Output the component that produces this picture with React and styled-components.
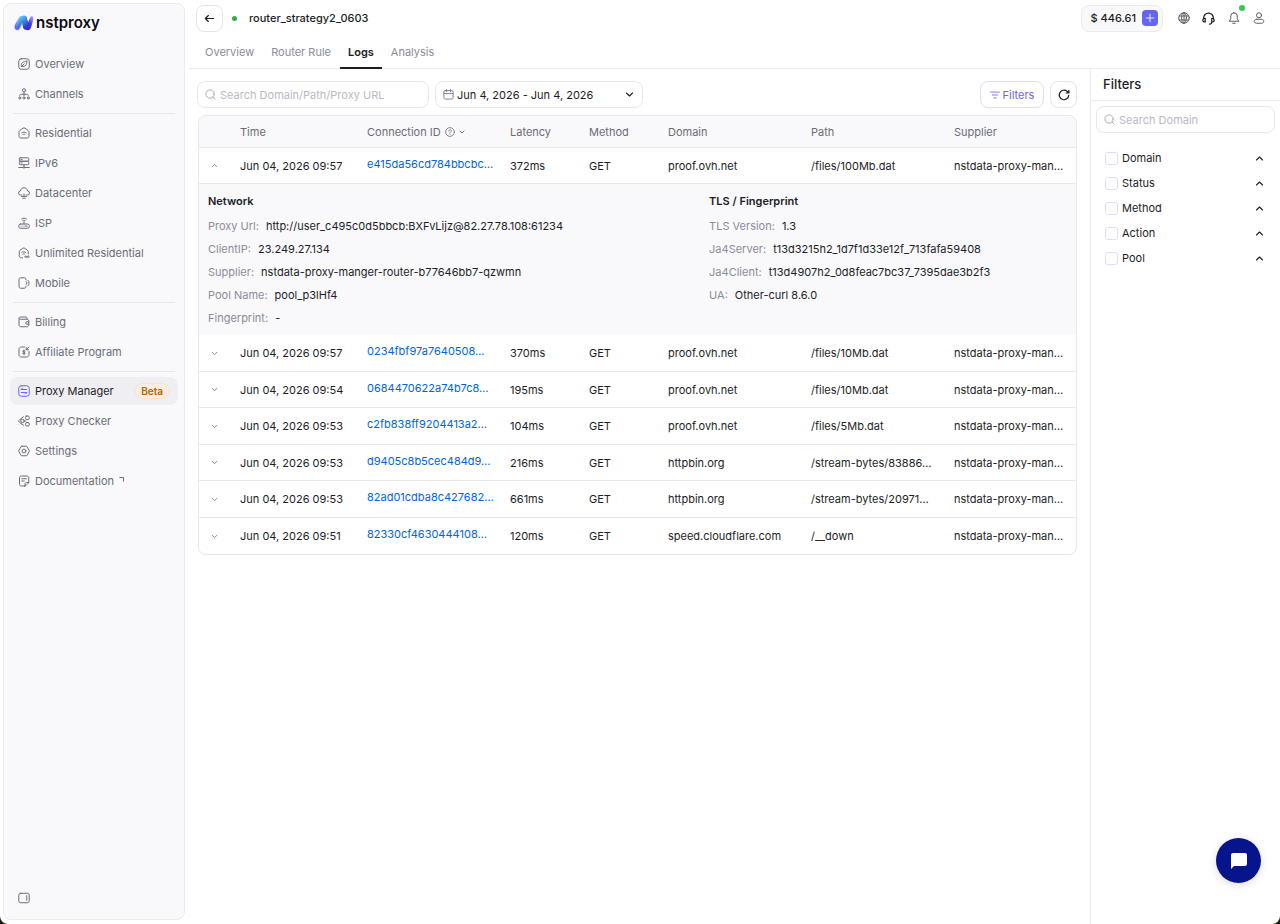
import React from "react";
import styled, { createGlobalStyle } from "styled-components";

const GlobalStyle = createGlobalStyle`
  * {
    box-sizing: border-box;
  }

  body {
    margin: 0;
    background: #1b1b10;
    color: #1c1d26;
    font-family: Inter, "Liberation Sans", sans-serif;
    font-size: 11px;
    line-height: 16px;
  }

  button,
  input {
    font: inherit;
    color: inherit;
  }

  button {
    padding: 0;
    border: 0;
    background: none;
    cursor: pointer;
  }

  a {
    color: inherit;
    text-decoration: none;
  }

  h1, h2, h3, p, dl, dd, ul {
    margin: 0;
    padding: 0;
  }
`;

const Icon = ({ size = 12, stroke = 2, children }) => (
  <svg
    width={size}
    height={size}
    viewBox="0 0 24 24"
    fill="none"
    stroke="currentColor"
    strokeWidth={stroke}
    strokeLinecap="round"
    strokeLinejoin="round"
    aria-hidden="true"
  >
    {children}
  </svg>
);

const icons = {
  overview: (
    <>
      <rect x="1.500" y="1.500" width="21" height="21" rx="5" />
      <path d="M17.500 6.500c.8 5-1 9.500-7.500 10.500-2 .3-3.300-.5-3.500-2C6 10.500 10 6.500 17.500 6.500z" />
      <path d="M6.500 17.500l6-6" />
    </>
  ),
  channels: (
    <>
      <circle cx="12" cy="4.500" r="3.200" />
      <path d="M12 8v8M3.500 16c0-2.500 1-3.500 3-3.500h11c2 0 3 1 3 3.500" />
      <circle cx="3.500" cy="20" r="2" />
      <circle cx="12" cy="20" r="2" />
      <circle cx="20.500" cy="20" r="2" />
    </>
  ),
  residential: (
    <>
      <path d="M2 10c0-1.300.5-2.200 1.600-3L10 2.300c1.300-.9 2.700-.9 4 0L20.400 7c1.100.8 1.600 1.700 1.600 3v8c0 2.500-1.500 4-4 4H6c-2.500 0-4-1.500-4-4z" />
      <path d="M7.500 11.500c2.800-1.800 6.200-1.800 9 0M10 14.800c1.300-.7 2.700-.7 4 0" />
    </>
  ),
  ipv6: (
    <>
      <rect x="2.500" y="1.500" width="19" height="7" rx="2" />
      <rect x="2.500" y="8.500" width="19" height="7" rx="2" />
      <path d="M6 5h2M6 12h2M12 15.500v4M1.500 21h8M14.500 21h8" />
      <circle cx="12" cy="21" r="1.500" />
    </>
  ),
  datacenter: (
    <>
      <path d="M8 16H5.500a4 4 0 0 1-.8-8C5.400 4 8.400 1.500 12 1.500S18.600 4 19.300 8a4 4 0 0 1-.8 8H16" />
      <path d="M12 14v5M7 19h10M9.500 22.500h5" />
    </>
  ),
  isp: (
    <>
      <rect x="1.500" y="14" width="21" height="8.500" rx="3.500" />
      <path d="M6 18.200h.1M10 18.200h.1M14 18.200h4M12 14V9.500M7 4c3-2.500 7-2.500 10 0M9.500 7.200c1.500-1.200 3.500-1.200 5 0" />
    </>
  ),
  unlimited: (
    <>
      <path d="M9 21.500H6.500c-2.500 0-4-1.500-4-4v-8c0-1.300.5-2.200 1.600-3L9.500 2.600c1.300-.9 2.700-.9 4 0l5.400 3.900c1.100.8 1.600 1.700 1.600 3V14" />
      <path d="M7.500 11c2.500-1.800 5.500-1.800 8 0M9.800 14.200c1-.7 2.400-.7 3.400 0" />
      <path d="M18 19.500c-1.500-2-4.500-2-4.500 0s3 2 4.500 0 4.500-2 4.500 0-3 2-4.500 0z" />
    </>
  ),
  mobile: (
    <>
      <path d="M16 5.500c0-2.500-1-4-3.500-4H6c-2.500 0-4 1.500-4 4v13c0 2.500 1.500 4 4 4h6.500c2.500 0 3.500-1.500 3.500-4" />
      <path d="M16.500 9c1.800 1.800 1.800 4.200 0 6M20 6.500c3 3 3 8 0 11" />
    </>
  ),
  billing: (
    <>
      <path d="M2 6v11.500c0 2.500 1.500 4 4 4h11.500c2.500 0 4-1.500 4-4V10c0-2-1.500-3.500-4-3.500H5C3 6.500 2 5.500 2 4.300 2 3 3 2 5 2h10.500c1.500 0 2.500 1 2.500 2.500v2" />
      <path d="M22 11.500h-4a2.500 2.500 0 0 0 0 5h4" />
    </>
  ),
  affiliate: (
    <>
      <path d="M13 2H7C4 2 2 4 2 7v10c0 3 2 5 5 5h10c3 0 5-2 5-5v-6" />
      <path d="M22 2l-5.500 5.500M16.500 3v4.500H21M14 10c-2-1.500-4.500-1-4.500.7 0 2.200 4.800 1.200 4.800 3.600 0 2-3.300 2.200-5 .7M12 8v9" />
    </>
  ),
  manager: (
    <>
      <rect x="1.500" y="1.500" width="21" height="21" rx="5" />
      <path d="M6.500 9h11M6.500 9l2.500-3M17.500 15h-11M17.500 15l-2.500 3" />
    </>
  ),
  checker: (
    <>
      <path d="M11 3.500L3 9.500c-2 1.600-2 3.500 0 5l8 6" />
      <circle cx="9" cy="12" r="3.500" />
      <path d="M12.500 12h3" />
      <rect x="15" y="2" width="7.500" height="7" rx="2.500" />
      <rect x="15" y="15" width="7.500" height="7" rx="2.500" />
    </>
  ),
  settings: (
    <>
      <path d="M8 2.500h8c1 0 1.700.4 2.200 1.200l4 6.800c.6 1 .6 2 0 3l-4 6.800c-.5.8-1.200 1.200-2.200 1.200H8c-1 0-1.700-.4-2.200-1.200l-4-6.800c-.6-1-.6-2 0-3l4-6.800C6.300 2.900 7 2.500 8 2.500z" />
      <circle cx="12" cy="12" r="3.800" />
    </>
  ),
  documentation: (
    <>
      <path d="M13.500 22H7c-2.500 0-4-1.500-4-4V6c0-2.500 1.500-4 4-4h10.500c2.500 0 4 1.500 4 4v8c0 1-.3 1.700-1 2.400L16 20.900c-.7.7-1.500 1.100-2.500 1.100z" />
      <path d="M7.500 7.500h9M7.500 12h5M14 21.500V18c0-2 1-3 3-3h4" />
    </>
  ),
  panel: (
    <>
      <rect x="1.500" y="2.500" width="21" height="19" rx="4" />
      <path d="M17.500 7.500v9" />
    </>
  ),
  arrowLeft: <path d="M21 12H3M9.500 5.500L3 12l6.500 6.500" />,
  search: (
    <>
      <circle cx="11" cy="11" r="9" />
      <path d="M18 18l4 4" />
    </>
  ),
  calendar: (
    <>
      <rect x="2" y="3.500" width="20" height="18.500" rx="3" />
      <path d="M2 10h20M7.500 1v5M16.500 1v5" />
    </>
  ),
  down: <path d="M4 8l8 8 8-8" />,
  up: <path d="M4 16l8-8 8 8" />,
  help: (
    <>
      <circle cx="12" cy="12" r="10.500" />
      <path d="M9 9.500c0-4 6-4 6-.3 0 2.300-3 2.300-3 4.800M12 17.500v.1" />
    </>
  ),
  filter: <path d="M1.500 5h21M5.500 12h13M9 19h6" />,
  refresh: (
    <path d="M21.500 12.500A9.500 9.500 0 1 1 18.500 5l3 2.800M21.800 2.500v5.500h-5.500" />
  ),
  plus: <path d="M12 3v18M3 12h18" />,
  globe: (
    <>
      <circle cx="12" cy="12" r="10.500" />
      <ellipse cx="12" cy="12" rx="4.800" ry="10.500" />
      <path d="M12 1.500v21M2.500 8h19M2.500 16h19" />
    </>
  ),
  headset: (
    <>
      <path d="M3 12.500V11a9 9 0 0 1 18 0v1.500" />
      <path d="M6 11.500v7c-3 0-4.500-1.500-4.500-3.500S3 11.500 6 11.500zM18 11.500v7c3 0 4.500-1.500 4.500-3.500s-1.500-3.500-4.500-3.500zM18 18.500c0 2.500-1.500 4-4 4" />
    </>
  ),
  bell: (
    <path d="M9.500 22.500h5M12 1.500A6.500 6.500 0 0 0 5.500 8v5.500L2.500 18.500h19l-3-5V8A6.500 6.500 0 0 0 12 1.500z" />
  ),
  user: (
    <>
      <circle cx="12" cy="6.500" r="5" />
      <path d="M7.500 14.500h9c3 0 5 1.600 5 4s-2 4-4.500 4H7c-2.500 0-4.500-1.600-4.500-4s2-4 5-4z" />
    </>
  ),
};

const navGroups = [
  [
    { icon: "overview", label: "Overview" },
    { icon: "channels", label: "Channels" },
  ],
  [
    { icon: "residential", label: "Residential" },
    { icon: "ipv6", label: "IPv6" },
    { icon: "datacenter", label: "Datacenter" },
    { icon: "isp", label: "ISP" },
    { icon: "unlimited", label: "Unlimited Residential" },
    { icon: "mobile", label: "Mobile" },
  ],
  [
    { icon: "billing", label: "Billing" },
    { icon: "affiliate", label: "Affiliate Program" },
  ],
  [
    { icon: "manager", label: "Proxy Manager", badge: "Beta", active: true },
    { icon: "checker", label: "Proxy Checker" },
    { icon: "settings", label: "Settings" },
    { icon: "documentation", label: "Documentation", external: true },
  ],
];

const tabs = ["Overview", "Router Rule", "Logs", "Analysis"];

const logs = [
  ["Jun 04, 2026 09:57", "e415da56cd784bbcbc…", "372ms", "GET", "proof.ovh.net", "/files/100Mb.dat"],
  ["Jun 04, 2026 09:57", "0234fbf97a7640508…", "370ms", "GET", "proof.ovh.net", "/files/10Mb.dat"],
  ["Jun 04, 2026 09:54", "0684470622a74b7c8…", "195ms", "GET", "proof.ovh.net", "/files/10Mb.dat"],
  ["Jun 04, 2026 09:53", "c2fb838ff9204413a2…", "104ms", "GET", "proof.ovh.net", "/files/5Mb.dat"],
  ["Jun 04, 2026 09:53", "d9405c8b5cec484d9…", "216ms", "GET", "httpbin.org", "/stream-bytes/83886…"],
  ["Jun 04, 2026 09:53", "82ad01cdba8c427682…", "661ms", "GET", "httpbin.org", "/stream-bytes/20971…"],
  ["Jun 04, 2026 09:51", "82330cf4630444108…", "120ms", "GET", "speed.cloudflare.com", "/__down"],
];

const network = [
  ["Proxy Url", "http://user_c495c0d5bbcb:BXFvLijz@82.27.78.108:61234"],
  ["ClientIP", "23.249.27.134"],
  ["Supplier", "nstdata-proxy-manger-router-b77646bb7-qzwmn"],
  ["Pool Name", "pool_p3lHf4"],
  ["Fingerprint", "-"],
];

const tls = [
  ["TLS Version", "1.3"],
  ["Ja4Server", "t13d3215h2_1d7f1d33e12f_713fafa59408"],
  ["Ja4Client", "t13d4907h2_0d8feac7bc37_7395dae3b2f3"],
  ["UA", "Other-curl 8.6.0"],
];

const filters = ["Domain", "Status", "Method", "Action", "Pool"];

const Logo = () => (
  <Brand href="#">
    <svg width="20" height="16" viewBox="0 0 40 32" aria-hidden="true">
      <defs>
        <linearGradient id="logoLeft" x1="0" y1="1" x2="0.700" y2="0">
          <stop offset="0" stopColor="#5b55e8" />
          <stop offset="0.500" stopColor="#7f9cf5" />
          <stop offset="1" stopColor="#8fd3f7" />
        </linearGradient>
        <linearGradient id="logoMiddle" x1="0" y1="0" x2="0.600" y2="1">
          <stop offset="0" stopColor="#7ce6f0" />
          <stop offset="0.500" stopColor="#3f8fe6" />
          <stop offset="1" stopColor="#2436c8" />
        </linearGradient>
        <linearGradient id="logoRight" x1="0" y1="1" x2="0.700" y2="0">
          <stop offset="0" stopColor="#3420cf" />
          <stop offset="0.600" stopColor="#4b35e6" />
          <stop offset="1" stopColor="#9a90ff" />
        </linearGradient>
      </defs>
      <path d="M2 19L10 5c1-2 3-3 5-3l9 1-11 22c-2 4-5 6-8 5-4-1-5-6-3-11z" fill="url(#logoLeft)" />
      <path d="M22 28L32 6c1-3 3-4 5-3 2 2 2 5 1 9l-4 13c-1 4-4 6-8 5-2 0-3-1-4-2z" fill="url(#logoRight)" />
      <path d="M13 4c3-3 9-4 12-1 1 1 1 3 1 5l3 7-4 12c-2 4-6 2-7-2L16 15 9 27c-2 1-4 0-3-3z" fill="url(#logoMiddle)" />
    </svg>
    nstproxy
  </Brand>
);

const Sidebar = () => (
  <SidebarPanel>
    <Logo />
    <Nav>
      {navGroups.map((group, i) => (
        <React.Fragment key={i}>
          {i > 0 && <Divider />}
          <NavGroup>
            {group.map((item) => (
              <NavItem key={item.label} href="#" $active={item.active}>
                <Icon>{icons[item.icon]}</Icon>
                <span>{item.label}</span>
                {item.badge && <Badge>{item.badge}</Badge>}
                {item.external && (
                  <ExternalMark viewBox="0 0 5 5" aria-hidden="true">
                    <path d="M0.500 0.500h4v4" />
                  </ExternalMark>
                )}
              </NavItem>
            ))}
          </NavGroup>
        </React.Fragment>
      ))}
    </Nav>
    <CollapseButton aria-label="Collapse sidebar">
      <Icon>{icons.panel}</Icon>
    </CollapseButton>
  </SidebarPanel>
);

const Header = () => (
  <TopBar>
    <TitleRow>
      <SquareButton aria-label="Back">
        <Icon size={11} stroke={2.6}>{icons.arrowLeft}</Icon>
      </SquareButton>
      <StatusDot />
      <h1>router_strategy2_0603</h1>
      <Account>
        <Balance>
          $ 446.61
          <AddButton aria-label="Add funds">
            <Icon size={10}>{icons.plus}</Icon>
          </AddButton>
        </Balance>
        <IconButton aria-label="Language">
          <Icon>{icons.globe}</Icon>
        </IconButton>
        <IconButton aria-label="Support" $dark>
          <Icon size={13} stroke={2.2}>{icons.headset}</Icon>
        </IconButton>
        <IconButton aria-label="Notifications">
          <Icon>{icons.bell}</Icon>
          <Unread />
        </IconButton>
        <IconButton aria-label="Account">
          <Icon>{icons.user}</Icon>
        </IconButton>
      </Account>
    </TitleRow>
    <Tabs>
      {tabs.map((tab) => (
        <Tab key={tab} href="#" $active={tab === "Logs"}>
          {tab}
        </Tab>
      ))}
    </Tabs>
  </TopBar>
);

const Details = ({ title, items }) => (
  <div>
    <h3>{title}</h3>
    <dl>
      {items.map(([name, value]) => (
        <DetailLine key={name}>
          <dt>{name}:</dt>
          <dd>{value}</dd>
        </DetailLine>
      ))}
    </dl>
  </div>
);

const LogTable = () => (
  <TableFrame>
    <Table>
      <colgroup>
        <Col $w={33} />
        <Col $w={127} />
        <Col $w={143} />
        <Col $w={79} />
        <Col $w={79} />
        <Col $w={143} />
        <Col $w={143} />
        <col />
      </colgroup>
      <thead>
        <tr>
          <th aria-label="Expand" />
          <th>Time</th>
          <th>
            <HeadLabel>
              Connection ID
              <Icon size={10}>{icons.help}</Icon>
              <Icon size={6} stroke={4}>{icons.down}</Icon>
            </HeadLabel>
          </th>
          <th>Latency</th>
          <th>Method</th>
          <th>Domain</th>
          <th>Path</th>
          <th>Supplier</th>
        </tr>
      </thead>
      <tbody>
        {logs.map(([time, id, latency, method, domain, path], i) => (
          <React.Fragment key={id}>
            <LogRow $tall={i % 2 === 1}>
              <td>
                <ExpandButton aria-label="Toggle details" aria-expanded={i === 0}>
                  <Icon size={7} stroke={3}>{i === 0 ? icons.up : icons.down}</Icon>
                </ExpandButton>
              </td>
              <td>{time}</td>
              <td>
                <IdLink href="#">{id}</IdLink>
              </td>
              <td>{latency}</td>
              <td>{method}</td>
              <td>{domain}</td>
              <td>{path}</td>
              <td>nstdata-proxy-man…</td>
            </LogRow>
            {i === 0 && (
              <DetailRow>
                <td colSpan={8}>
                  <DetailGrid>
                    <Details title="Network" items={network} />
                    <Details title="TLS / Fingerprint" items={tls} />
                  </DetailGrid>
                </td>
              </DetailRow>
            )}
          </React.Fragment>
        ))}
      </tbody>
    </Table>
  </TableFrame>
);

const FilterPanel = () => (
  <FilterAside>
    <h2>Filters</h2>
    <FilterBody>
      <SearchBox>
        <Icon size={11}>{icons.search}</Icon>
        <input type="text" placeholder="Search Domain" aria-label="Search Domain" />
      </SearchBox>
      <FilterList>
        {filters.map((name) => (
          <FilterItem key={name}>
            <label>
              <Checkbox type="checkbox" />
              {name}
            </label>
            <button aria-label={`Toggle ${name}`}>
              <Icon size={9} stroke={3}>{icons.up}</Icon>
            </button>
          </FilterItem>
        ))}
      </FilterList>
    </FilterBody>
  </FilterAside>
);

const App = () => {
  return (
    <>
      <GlobalStyle />
      <Page>
        <Sidebar />
        <Main>
          <Header />
          <Content>
            <LogSection>
              <Toolbar>
                <SearchBox $width="232px">
                  <Icon size={11}>{icons.search}</Icon>
                  <input
                    type="text"
                    placeholder="Search Domain/Path/Proxy URL"
                    aria-label="Search Domain/Path/Proxy URL"
                  />
                </SearchBox>
                <DateButton>
                  <Icon size={11}>{icons.calendar}</Icon>
                  <span>Jun 4, 2026 - Jun 4, 2026</span>
                  <Icon size={9} stroke={3}>{icons.down}</Icon>
                </DateButton>
                <FilterButton>
                  <Icon size={10}>{icons.filter}</Icon>
                  Filters
                </FilterButton>
                <SquareButton aria-label="Refresh">
                  <Icon stroke={2.4}>{icons.refresh}</Icon>
                </SquareButton>
              </Toolbar>
              <LogTable />
            </LogSection>
            <FilterPanel />
          </Content>
        </Main>
        <ChatButton aria-label="Open chat">
          <svg width="18" height="18" viewBox="0 0 18 18" fill="#fff" aria-hidden="true">
            <path d="M3 1h12a2 2 0 0 1 2 2v9a2 2 0 0 1-2 2H4l-3 3V3a2 2 0 0 1 2-2z" />
          </svg>
        </ChatButton>
      </Page>
    </>
  );
};

const Page = styled.div`
  display: flex;
  min-height: 100vh;
  background: #fff;
  border-radius: 0 0 8px 8px;
  overflow: hidden;
`;

const SidebarPanel = styled.aside`
  display: flex;
  flex-direction: column;
  flex: none;
  width: 182px;
  margin: 3px 4px 4px 3px;
  padding: 0 6px;
  border: 1px solid #ebebef;
  border-radius: 8px;
  background: #f9f9fb;
`;

const Brand = styled.a`
  display: flex;
  align-items: center;
  gap: 2px;
  height: 38px;
  padding-left: 4px;
  margin-bottom: 8px;
  color: #0b0b12;
  font-size: 15px;
  font-weight: 600;
`;

const Nav = styled.nav`
  flex: 1;
`;

const NavGroup = styled.div`
  display: flex;
  flex-direction: column;
  gap: 2px;
`;

const Divider = styled.hr`
  height: 1px;
  margin: 5px 3px;
  border: 0;
  background: #e8e8ec;
`;

const NavItem = styled.a`
  display: flex;
  align-items: center;
  gap: 5px;
  height: 28px;
  padding: 0 8px;
  border-radius: 8px;
  background: ${(p) => (p.$active ? "#efeff3" : "transparent")};
  color: ${(p) => (p.$active ? "#1c1d26" : "#6b6c78")};

  svg {
    flex: none;
    color: ${(p) => (p.$active ? "#6e62f5" : "inherit")};
  }
`;

const Badge = styled.span`
  margin-left: auto;
  padding: 0 6px;
  border: 1px solid #fbe2c8;
  border-radius: 8px;
  background: #faeee4;
  color: #b86408;
  font-size: 10px;
  font-weight: 600;
  line-height: 14px;
`;

const ExternalMark = styled.svg`
  width: 5px;
  height: 5px;
  margin-bottom: 4px;
  fill: none;
  stroke: currentColor;
`;

const CollapseButton = styled.button`
  display: flex;
  align-self: flex-start;
  margin: 0 8px 15px;
  color: #6b6c78;
`;

const Main = styled.main`
  display: flex;
  flex-direction: column;
  flex: 1;
  min-width: 0;
`;

const TopBar = styled.header`
  border-bottom: 1px solid #ebebef;
`;

const TitleRow = styled.div`
  display: flex;
  align-items: center;
  height: 36px;
  padding: 0 15px 0 7px;

  h1 {
    font-size: 11px;
    font-weight: 500;
  }
`;

const SquareButton = styled.button`
  display: flex;
  align-items: center;
  justify-content: center;
  flex: none;
  width: 27px;
  height: 27px;
  border: 1px solid #e4e4e9;
  border-radius: 8px;
  background: #fff;
  color: #1c1d26;
`;

const StatusDot = styled.span`
  width: 5px;
  height: 5px;
  margin: 0 12px 0 9px;
  border-radius: 50%;
  background: #32a852;
`;

const Account = styled.div`
  display: flex;
  align-items: center;
  gap: 12px;
  margin-left: auto;
`;

const Balance = styled.div`
  display: flex;
  align-items: center;
  gap: 6px;
  height: 27px;
  margin-right: 2px;
  padding: 0 4px 0 8px;
  border: 1px solid #ebebef;
  border-radius: 8px;
  background: #f9f9fb;
  font-weight: 500;
`;

const AddButton = styled.button`
  display: flex;
  align-items: center;
  justify-content: center;
  width: 16px;
  height: 16px;
  border-radius: 4px;
  background: #6366f1;
  color: #fff;
`;

const IconButton = styled.button`
  position: relative;
  display: flex;
  align-items: center;
  justify-content: center;
  width: 13px;
  height: 13px;
  color: ${(p) => (p.$dark ? "#1c1d26" : "#5c5d68")};
`;

const Unread = styled.span`
  position: absolute;
  top: -7px;
  right: -5px;
  width: 6px;
  height: 6px;
  border-radius: 50%;
  background: #34c759;
`;

const Tabs = styled.nav`
  display: flex;
  gap: 1px;
  height: 32px;
  padding-left: 8px;
`;

const Tab = styled.a`
  height: 33px;
  padding: 0 8px;
  border-bottom: 2px solid ${(p) => (p.$active ? "#1c1d2b" : "transparent")};
  color: ${(p) => (p.$active ? "#1c1d26" : "#8b8c98")};
  font-weight: ${(p) => (p.$active ? 600 : 400)};
  line-height: 32px;
`;

const Content = styled.div`
  display: flex;
  flex: 1;
`;

const LogSection = styled.section`
  flex: 1;
  min-width: 0;
  padding: 12px 13px 12px 8px;
`;

const Toolbar = styled.div`
  display: flex;
  gap: 6px;
  margin-bottom: 7px;
`;

const SearchBox = styled.div`
  display: flex;
  align-items: center;
  gap: 4px;
  width: ${(p) => p.$width || "auto"};
  height: 27px;
  padding: 0 7px;
  border: 1px solid #e8e8ec;
  border-radius: 8px;
  background: #fff;
  color: #a3a4b0;

  svg {
    flex: none;
  }

  input {
    flex: 1;
    min-width: 0;
    padding: 0;
    border: 0;
    outline: 0;
    background: none;
    color: #1c1d26;
  }

  input::placeholder {
    color: #b9bac4;
  }
`;

const DateButton = styled.button`
  display: flex;
  align-items: center;
  gap: 3px;
  width: 208px;
  height: 27px;
  padding: 0 8px 0 7px;
  border: 1px solid #e8e8ec;
  border-radius: 8px;
  background: #fff;

  span {
    flex: 1;
    text-align: left;
  }

  svg:first-child {
    color: #7a7b87;
  }
`;

const FilterButton = styled.button`
  display: flex;
  align-items: center;
  justify-content: center;
  gap: 3px;
  width: 64px;
  height: 27px;
  margin-left: auto;
  border: 1px solid #dfdcfd;
  border-radius: 8px;
  background: #fff;
  color: #6e62f5;
`;

const TableFrame = styled.div`
  margin-left: 1px;
  border: 1px solid #e8e8ec;
  border-radius: 8px;
  overflow: hidden;
`;

const Table = styled.table`
  width: 100%;
  table-layout: fixed;
  border-collapse: separate;
  border-spacing: 0;

  th,
  td {
    padding: 0 8px;
    text-align: left;
    white-space: nowrap;
  }

  th {
    height: 32px;
    border-bottom: 1px solid #e8e8ec;
    background: #f9f9fb;
    color: #6b6c78;
    font-weight: 400;
  }
`;

const Col = styled.col`
  width: ${(p) => p.$w}px;
`;

const HeadLabel = styled.span`
  display: flex;
  align-items: center;
  gap: 4px;
`;

const LogRow = styled.tr`
  td {
    height: ${(p) => (p.$tall ? 37 : 36)}px;
    border-bottom: 1px solid #e8e8ec;
  }

  &:last-child td {
    border-bottom: 0;
  }
`;

const ExpandButton = styled.button`
  display: flex;
  margin-left: 4px;
  color: #7a7b87;
`;

const IdLink = styled.a`
  display: inline-block;
  max-width: 100%;
  overflow: hidden;
  color: #0064e0;
`;

const DetailRow = styled.tr`
  td {
    padding: 9px;
    background: #f9f9fb;
  }
`;

const DetailGrid = styled.div`
  display: grid;
  grid-template-columns: 7fr 5fr;

  h3 {
    margin-bottom: 9px;
    font-size: 11px;
    font-weight: 600;
  }

  dl {
    display: flex;
    flex-direction: column;
    gap: 7px;
  }
`;

const DetailLine = styled.div`
  display: flex;
  gap: 7px;

  dt {
    color: #8b8c98;
  }
`;

const FilterAside = styled.aside`
  flex: none;
  width: 190px;
  border-left: 1px solid #ebebef;

  h2 {
    padding: 0 12px;
    border-bottom: 1px solid #ebebef;
    font-size: 13px;
    font-weight: 500;
    line-height: 31px;
  }
`;

const FilterBody = styled.div`
  padding: 5px;
`;

const FilterList = styled.ul`
  display: flex;
  flex-direction: column;
  gap: 9px;
  margin-top: 17px;
  padding: 0 11px 0 9px;
  list-style: none;
`;

const FilterItem = styled.li`
  display: flex;
  align-items: center;
  justify-content: space-between;

  label {
    display: flex;
    align-items: center;
    gap: 4px;
  }

  button {
    display: flex;
  }
`;

const Checkbox = styled.input`
  appearance: none;
  width: 13px;
  height: 13px;
  margin: 0;
  border: 1px solid #dfdcfd;
  border-radius: 3px;
  background: #fff;
`;

const ChatButton = styled.button`
  position: fixed;
  right: 19px;
  bottom: 41px;
  display: flex;
  align-items: center;
  justify-content: center;
  width: 45px;
  height: 45px;
  border-radius: 50%;
  background: #07158c;
  box-shadow: 0 2px 8px rgba(0, 0, 0, 0.15);
`;

export default App;
